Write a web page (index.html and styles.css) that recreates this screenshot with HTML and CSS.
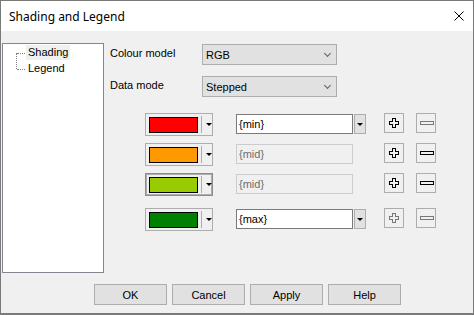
FILE: index.html
```html
<!DOCTYPE html>
<html lang="en">
<head>
  <meta charset="UTF-8">
  <title>Shading and Legend</title>
  <link rel="stylesheet" href="styles.css">
</head>
<body>

  <div class="window">
    <div class="titlebar">
      <span class="title">Shading and Legend</span>
      <svg class="close" width="10" height="10" viewBox="0 0 10 10">
        <path d="M0.5 0.5 L9.5 9.5 M9.5 0.5 L0.5 9.5" stroke="#000" stroke-width="1" fill="none"/>
      </svg>
    </div>

    <div class="content">
      <div class="tree">
        <ul class="tree-list">
          <li class="tree-item first"><span class="selected">Shading</span></li>
          <li class="tree-item"><span>Legend</span></li>
        </ul>
      </div>

      <div class="main">
        <div class="field-row">
          <label class="field-label">Colour model</label>
          <div class="combo"><span>RGB</span><span class="chevron"></span></div>
        </div>
        <div class="field-row">
          <label class="field-label">Data mode</label>
          <div class="combo"><span>Stepped</span><span class="chevron"></span></div>
        </div>

        <div class="stops">
          <div class="stop">
            <div class="colour-btn"><span class="swatch red"></span><span class="sep"></span><span class="arrow"></span></div>
            <div class="text-field">{min}</div>
            <div class="drop-btn"><span class="arrow"></span></div>
            <div class="icon-btn plus"></div>
            <div class="icon-btn minus off"></div>
          </div>
          <div class="stop">
            <div class="colour-btn"><span class="swatch orange"></span><span class="sep"></span><span class="arrow"></span></div>
            <div class="text-field disabled">{mid}</div>
            <div class="drop-space"></div>
            <div class="icon-btn plus"></div>
            <div class="icon-btn minus"></div>
          </div>
          <div class="stop">
            <div class="colour-btn focused"><span class="swatch lime"></span><span class="sep"></span><span class="arrow"></span></div>
            <div class="text-field disabled">{mid}</div>
            <div class="drop-space"></div>
            <div class="icon-btn plus"></div>
            <div class="icon-btn minus"></div>
          </div>
          <div class="stop last">
            <div class="colour-btn"><span class="swatch green"></span><span class="sep"></span><span class="arrow"></span></div>
            <div class="text-field">{max}</div>
            <div class="drop-btn"><span class="arrow"></span></div>
            <div class="icon-btn plus off"></div>
            <div class="icon-btn minus off"></div>
          </div>
        </div>
      </div>
    </div>

    <div class="footer">
      <button class="btn">OK</button>
      <button class="btn">Cancel</button>
      <button class="btn">Apply</button>
      <button class="btn">Help</button>
    </div>
  </div>

</body>
</html>
```

FILE: styles.css
```css
body {
  margin: 0;
  padding: 0;
  font-family: "Liberation Sans", Arial, sans-serif;
  font-size: 11px;
  color: #000;
}

.window {
  width: 474px;
  height: 315px;
  box-sizing: border-box;
  border: 1px solid #7a7a7a;
  border-bottom-width: 2px;
  background: #f0f0f0;
  display: flex;
  flex-direction: column;
}

.titlebar {
  height: 30px;
  background: #fff;
  display: flex;
  align-items: center;
  justify-content: space-between;
  padding: 0 9px 0 8px;
}

.title {
  font-family: "Noto Sans", sans-serif;
  font-size: 12px;
}

.content {
  display: flex;
  padding: 12px 0 0 1px;
}

.tree {
  width: 102px;
  height: 230px;
  box-sizing: border-box;
  border: 1px solid #828790;
  background: #fff;
}

.tree-list {
  list-style: none;
  margin: 0;
  padding: 1px 0 0 23px;
}

.tree-item {
  position: relative;
  height: 16px;
  line-height: 15px;
}

.tree-item span {
  padding: 0 2px;
  display: inline-block;
  height: 15px;
}

.tree-item .selected {
  background: #f0f0f0;
}

.tree-item::before {
  content: "";
  position: absolute;
  left: -9px;
  top: 8px;
  width: 8px;
  border-top: 1px dotted #808080;
}

.tree-item.first::after {
  content: "";
  position: absolute;
  left: -10px;
  top: 8px;
  height: 16px;
  border-left: 1px dotted #808080;
}

.main {
  margin-left: 6px;
  padding-top: 1px;
  flex: 1;
}

.field-row {
  display: flex;
  align-items: center;
  height: 21px;
  margin-bottom: 11px;
}

.field-label {
  width: 92px;
  margin-top: -4px;
}

.combo {
  width: 135px;
  height: 21px;
  box-sizing: border-box;
  border: 1px solid #adadad;
  background: #e1e1e1;
  display: flex;
  align-items: center;
  justify-content: space-between;
  padding: 0 6px 0 3px;
}

.chevron {
  width: 4px;
  height: 4px;
  border-right: 1px solid #606060;
  border-bottom: 1px solid #606060;
  transform: rotate(45deg);
  margin-top: -3px;
}

.stops {
  margin-top: 16px;
}

.stop {
  display: flex;
  align-items: flex-start;
  height: 23px;
  margin-bottom: 7px;
}

.stop.last {
  margin-top: 12px;
}

.colour-btn {
  margin-left: 35px;
  width: 68px;
  height: 23px;
  box-sizing: border-box;
  border: 1px solid #adadad;
  display: flex;
  align-items: center;
  padding-left: 3px;
}

.colour-btn.focused {
  box-shadow: inset 0 0 0 1px #adadad;
  border-color: #8c8c8c;
}

.swatch {
  width: 50px;
  height: 16px;
  box-sizing: border-box;
  border: 1px solid #000;
}

.red { background: #ff0000; }
.orange { background: #ff9900; }
.lime { background: #99cc00; }
.green { background: #008000; }

.sep {
  width: 1px;
  height: 17px;
  background: #adadad;
  margin: 0 4px 0 3px;
}

.arrow {
  width: 0;
  height: 0;
  border-left: 3px solid transparent;
  border-right: 3px solid transparent;
  border-top: 3px solid #000;
}

.text-field {
  margin: 1px 0 0 23px;
  width: 117px;
  height: 20px;
  box-sizing: border-box;
  border: 1px solid #7a7a7a;
  background: #fff;
  padding: 0 0 0 2px;
  line-height: 18px;
}

.text-field.disabled {
  border-color: #cccccc;
  background: #f0f0f0;
  color: #6d6d6d;
}

.drop-btn,
.drop-space {
  margin: 1px 0 0 1px;
  width: 12px;
  height: 20px;
  box-sizing: border-box;
}

.drop-btn {
  border: 1px solid #adadad;
  background: #e1e1e1;
  display: flex;
  align-items: center;
  justify-content: center;
}

.icon-btn {
  width: 20px;
  height: 20px;
  box-sizing: border-box;
  border: 1px solid #adadad;
  position: relative;
}

.plus {
  margin-left: 18px;
}

.minus {
  margin-left: 12px;
}

.plus::before {
  content: "";
  position: absolute;
  left: 4px;
  top: 4px;
  width: 10px;
  height: 10px;
  background:
    linear-gradient(#000, #000) 3px 0 / 4px 1px no-repeat,
    linear-gradient(#000, #000) 3px 9px / 4px 1px no-repeat,
    linear-gradient(#000, #000) 0 3px / 1px 4px no-repeat,
    linear-gradient(#000, #000) 9px 3px / 1px 4px no-repeat,
    linear-gradient(#000, #000) 3px 0 / 1px 4px no-repeat,
    linear-gradient(#000, #000) 6px 0 / 1px 4px no-repeat,
    linear-gradient(#000, #000) 3px 6px / 1px 4px no-repeat,
    linear-gradient(#000, #000) 6px 6px / 1px 4px no-repeat,
    linear-gradient(#000, #000) 0 3px / 4px 1px no-repeat,
    linear-gradient(#000, #000) 0 6px / 4px 1px no-repeat,
    linear-gradient(#000, #000) 6px 3px / 4px 1px no-repeat,
    linear-gradient(#000, #000) 6px 6px / 4px 1px no-repeat;
}

.minus::before {
  content: "";
  position: absolute;
  left: 3px;
  top: 7px;
  width: 14px;
  height: 4px;
  box-sizing: border-box;
  border: 1px solid #000;
}

.icon-btn.off::before {
  opacity: 0.5;
}

.footer {
  margin-top: 11px;
  display: flex;
  gap: 5px;
  padding-left: 93px;
}

.btn {
  width: 73px;
  height: 21px;
  border: 1px solid #adadad;
  background: #e1e1e1;
  font-family: "Liberation Sans", Arial, sans-serif;
  font-size: 11px;
  color: #000;
  padding: 0;
}
```
